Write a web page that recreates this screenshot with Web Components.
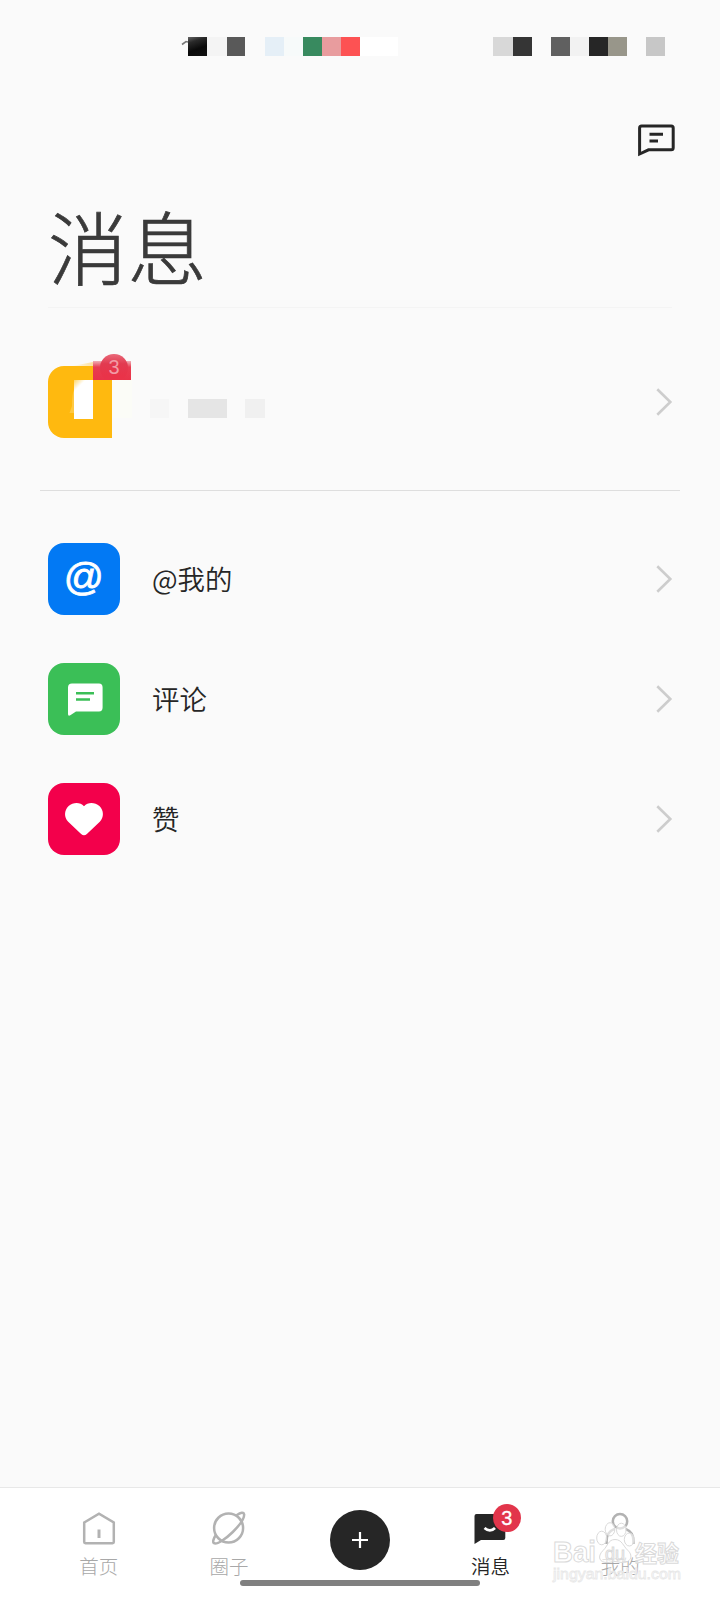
<!DOCTYPE html>
<html lang="zh-CN">
<head>
<meta charset="utf-8">
<title>消息</title>
<style>
html,body{margin:0;height:100%;background:#fafafa}
body{font-family:"Noto Sans CJK SC","Noto Sans",sans-serif;color:#262626}
</style>
</head>
<body>
<message-app></message-app>
<script>
const define = (name, html, setup) => {
  const tpl = document.createElement('template');
  tpl.innerHTML = html;
  customElements.define(name, class extends HTMLElement {
    constructor() {
      super();
      this.attachShadow({mode: 'open'}).appendChild(tpl.content.cloneNode(true));
    }
    connectedCallback() { if (setup) setup(this, this.shadowRoot); }
  });
};

/* A run of coloured cells: "colour:width,colour:width" */
define('pixel-strip', `<style>:host{display:flex;height:19px}i{display:block;height:100%}</style>`, (el, root) => {
  el.getAttribute('cells').split(',').forEach(c => {
    const [color, w] = c.split(':');
    const i = document.createElement('i');
    i.style.width = w + 'px';
    i.style.background = color;
    root.appendChild(i);
  });
});

define('status-bar', `<style>
:host{display:flex;box-sizing:border-box;height:100px;padding:36.5px 55px 0 181px;justify-content:space-between}
.left{display:flex}
svg{display:block}
.first{display:block;width:19px;height:19px;background:linear-gradient(160deg,#666 0,#2a2a2a 25%,#0a0a0a 60%,#111 100%)}
</style>
<div class="left"><svg width="7" height="19" viewBox="0 0 7 19"><path d="M1 7.5 5 4.5 7 5" fill="none" stroke="#777" stroke-width="1.6"/></svg>
<span class="first"></span>
<pixel-strip cells="#f4f4f4:19.5,#595959:18.5,transparent:19.5,#e5eff7:19,#f7fafa:19,#388a5f:19,#e89c9e:19,#fd5253:19,#fff:38"></pixel-strip></div>
<pixel-strip cells="#d8d8d8:19.5,#353535:19.5,transparent:18.5,#606060:19.5,#f2f2f2:18.5,#262626:19.5,#98968a:19,transparent:19,#c7c7c7:19"></pixel-strip>`);

define('page-header', `<style>
:host{display:block;margin:0 48px;height:208px;box-sizing:border-box;border-bottom:1px solid #f4f4f4}
.tools{display:flex;justify-content:flex-end;height:80px;align-items:flex-start;padding-top:24px;box-sizing:border-box;margin-right:-4px}
h1{margin:12px 0 0;font-size:79.5px;line-height:105px;font-weight:300;color:#3a3a3a;-webkit-text-stroke:.7px #3a3a3a}
</style>
<div class="tools"><svg width="38" height="34" viewBox="0 0 38 34"><path d="M1.6 30V4Q1.6 2 3.6 2H33.2Q35.2 2 35.2 4V23.8Q35.2 25.8 33.2 25.8H10.5Z" fill="none" stroke="#262626" stroke-width="3"/><path d="M11.5 10.3H25M11.5 17H20" stroke="#262626" stroke-width="3"/></svg></div>
<h1><slot></slot></h1>`);

define('list-row', `<style>
:host{display:flex;align-items:center;height:120px;padding:0 47.5px 0 48px;font-size:27.4px;line-height:40px;font-weight:350}
.label{flex:1;margin:-2px 0 0 32px}
svg{display:block;flex:none}
</style>
<slot name="icon"></slot><span class="label"><slot></slot></span>
<svg width="18" height="30" viewBox="0 0 18 30"><path d="M2.3 2.3 15.3 15 2.3 27.7" fill="none" stroke="#cdcdcd" stroke-width="2.6"/></svg>`);

define('app-tile', `<style>
:host{display:block;width:72px;height:72px;border-radius:16px;background:var(--tile)}
svg{display:block}
</style><svg width="72" height="72" viewBox="0 0 72 72"></svg>`, (el, root) => {
  root.querySelector('svg').innerHTML = {
    at: '<text x="35.7" y="47.4" text-anchor="middle" font-family="Liberation Sans" font-size="39.5" fill="#fff" stroke="#fff" stroke-width=".8">@</text>',
    comment: '<path d="M20 51V24.5Q20 20.5 24 20.5H51Q54.6 20.5 54.6 24.5V44.5Q54.6 48.5 51 48.5H28L22.3 52.3Q20 53.5 20 51Z" fill="#fff"/><path d="M28 30.3H46M28 36.6H42" stroke="#3bbf57" stroke-width="2.5"/>',
    heart: '<path d="M36 23.3C40 18.6 47 19.1 51.4 23.1C56 27.5 56.1 34.5 51.8 38.8L38.9 50.9Q36 53.7 33.1 50.9L20.2 38.8C15.9 34.5 16 27.5 20.6 23.1C25 19.1 32 18.6 36 23.3Z" fill="#fff"/>'
  }[el.getAttribute('kind')];
});

/* Notification tile, partly covered by mosaic cells */
define('notice-tile', `<style>
:host{display:block;position:relative;width:72px;height:72px}
.body{width:64px;height:71.5px;border-radius:16px 0 0 16px;background:#ffb90f}
.fade{position:absolute;left:64px;top:14px;width:20px;height:38px;background:#fbfcf7}
.white{position:absolute;left:26px;top:14px;width:19px;height:39px;background:linear-gradient(135deg,#ffd566 0,#fff 20%)}
.red{position:absolute;left:45px;top:-5px;width:38px;height:19px;background:linear-gradient(#efb0b7 0,#e83d51 32%,#e93349 100%)}
.dot{position:absolute;left:52px;top:-12.5px;width:28px;height:26.5px;overflow:hidden;color:#f29ba6;font:400 20px/27px "Liberation Sans",sans-serif;text-align:center}
.dot::before{content:"";position:absolute;inset:0 0 -2px;border-radius:50%;background:linear-gradient(#e96a7a,#e23a50 35%,#e93349 75%)}
.dot span{position:relative}
svg{position:absolute;left:0;top:-5px}
</style>
<div class="body"></div><div class="fade"></div><div class="white"></div><div class="red"></div>
<div class="dot"><span>3</span></div>
<svg width="46" height="60" viewBox="0 0 46 60"><defs><linearGradient id="g"><stop stop-color="#ffd878" stop-opacity="0"/><stop offset="1" stop-color="#ffd878" stop-opacity=".7"/></linearGradient></defs><path d="M24 5 45 1V5Z" fill="url(#g)"/><path d="M26 29Q24 33 24 45L21.5 52H26" fill="#ffc942"/></svg>`);

define('hr-line', `<style>:host{display:block;height:1px;margin:0 40px;background:#dedede}</style>`);

define('count-badge', `<style>
:host{display:flex;align-items:center;justify-content:center;width:28px;height:28px;border-radius:50%;background:#e2354b;color:#fff;font:400 20px/28px "Liberation Sans",sans-serif;-webkit-text-stroke:.3px #fff}
</style><slot></slot>`);

define('tab-item', `<style>
:host{display:flex;flex:1 1 20%;box-sizing:border-box;padding-right:1px;flex-direction:column;align-items:center;color:#a8a8a8;font-size:19.5px;line-height:28px;font-weight:300}
:host([active]){color:#262626;font-weight:350;padding-right:0}
.icon{position:relative;height:34px;margin:23px 0 7px}
svg{display:block}
::slotted(count-badge){position:absolute;left:19.5px;top:-7px}
</style>
<div class="icon"><svg width="34" height="34" viewBox="0 0 34 34" fill="none" stroke="#b2b2b2" stroke-width="2.5"></svg><slot name="badge"></slot></div><slot></slot>`, (el, root) => {
  root.querySelector('svg').innerHTML = {
    home: '<path d="M2.2 11.5 17 2.6 31.8 11.5V31Q31.8 32.2 30.6 32.2H3.4Q2.2 32.2 2.2 31Z"/><path d="M17 18.5V27" stroke-width="3"/>',
    planet: '<circle cx="16.6" cy="17" r="14.5"/><path d="M24.5 4.3C29 1.4 31.6 1 32.1 3.2C32.6 7 27.2 14.6 20.8 21C14 27.7 5 33.8 2 32.2C.4 31.2 1.3 27.8 4 23.8"/>',
    message: '<path d="M1.5 33V5Q1.5 3 3.5 3H30.5Q32.3 3 32.3 5V27Q32.3 29 30.3 29H8Z" fill="#262626" stroke="none"/><path d="M11.5 17Q17 21.8 22 17" stroke="#fff" stroke-width="2.8"/>',
    user: '<circle cx="17" cy="10.2" r="7.2"/><path d="M3.6 33V29.5Q3.6 21 11.5 17.8M22.5 17.8Q30.4 21 30.4 29.5V33"/>'
  }[el.getAttribute('kind')];
});

define('add-button', `<style>
:host{display:flex;flex:1 1 20%;justify-content:center;padding-top:22px}
b{display:flex;width:60px;height:60px;border-radius:50%;background:#262626}
</style><b><svg width="60" height="60" viewBox="0 0 60 60"><path d="M30 22V38M22 30H38" stroke="#fff" stroke-width="2.2"/></svg></b>`);

define('tab-bar', `<style>
:host{display:block;position:relative;box-sizing:border-box;height:113px;border-top:1px solid #e8e8e8;background:#fff}
.tabs{display:flex;padding:0 34px;height:92px}
.pill{width:240px;height:6px;margin:0 auto;border-radius:3px;background:#808080}
water-mark{position:absolute;left:548px;top:32px}
</style><div class="tabs"><slot></slot></div><div class="pill"></div><water-mark></water-mark>`);

define('water-mark', `<style>:host{display:block}svg{display:block;overflow:visible}</style>
<svg width="140" height="66" viewBox="0 0 140 66" fill="#fff" fill-opacity=".6" stroke="#dadada" stroke-width="1" font-family="Liberation Sans,Noto Sans CJK SC,sans-serif">
<text x="5" y="42" font-size="29" font-weight="700" textLength="43" lengthAdjust="spacingAndGlyphs">Bai</text>
<text x="87" y="42" font-size="23" font-weight="700" font-family="Noto Sans CJK SC" textLength="44" lengthAdjust="spacingAndGlyphs">经验</text>
<ellipse cx="53.7" cy="18" rx="5" ry="6.8"/><ellipse cx="62" cy="9.3" rx="4.8" ry="6.6"/><ellipse cx="73.3" cy="9.8" rx="4.8" ry="6.6"/><ellipse cx="81.3" cy="19.5" rx="5" ry="6.5"/>
<path d="M67 19.5C74 19.5 75 26 80 30.5C86 36.5 82 43 74 42.5Q67 40.5 60 42.5C51 43 49 36.5 55 30.5C60 26 60 19.5 67 19.5Z"/>
<text x="57" y="40" font-size="18" textLength="20" lengthAdjust="spacingAndGlyphs">du</text>
<text x="5" y="58.5" font-size="15" stroke="#e8e8e8" stroke-width=".8" textLength="128" lengthAdjust="spacingAndGlyphs">jingyan.baidu.com</text>
</svg>`);

define('message-app', `<style>
:host{display:flex;flex-direction:column;width:720px;height:1600px;background:#fafafa}
main{flex:1}
.top{padding:34px 0 28px}
.list{padding-top:28px}
.mosaic{display:flex;height:19.5px;margin-top:15px;margin-left:-2px}
</style>
<status-bar></status-bar>
<page-header>消息</page-header>
<main>
<div class="top"><list-row><notice-tile slot="icon"></notice-tile><pixel-strip class="mosaic" cells="#f6f6f6:19,transparent:19,#e5e5e5:39,transparent:18,#f0f0f0:20"></pixel-strip></list-row></div>
<hr-line></hr-line>
<div class="list">
<list-row><app-tile slot="icon" kind="at" style="--tile:#0279f4"></app-tile>@我的</list-row>
<list-row><app-tile slot="icon" kind="comment" style="--tile:#3bbf57"></app-tile>评论</list-row>
<list-row><app-tile slot="icon" kind="heart" style="--tile:#f3004b"></app-tile>赞</list-row>
</div>
</main>
<tab-bar>
<tab-item kind="home">首页</tab-item>
<tab-item kind="planet">圈子</tab-item>
<add-button></add-button>
<tab-item kind="message" active>消息<count-badge slot="badge">3</count-badge></tab-item>
<tab-item kind="user">我的</tab-item>
</tab-bar>`);
</script>
</body>
</html>
